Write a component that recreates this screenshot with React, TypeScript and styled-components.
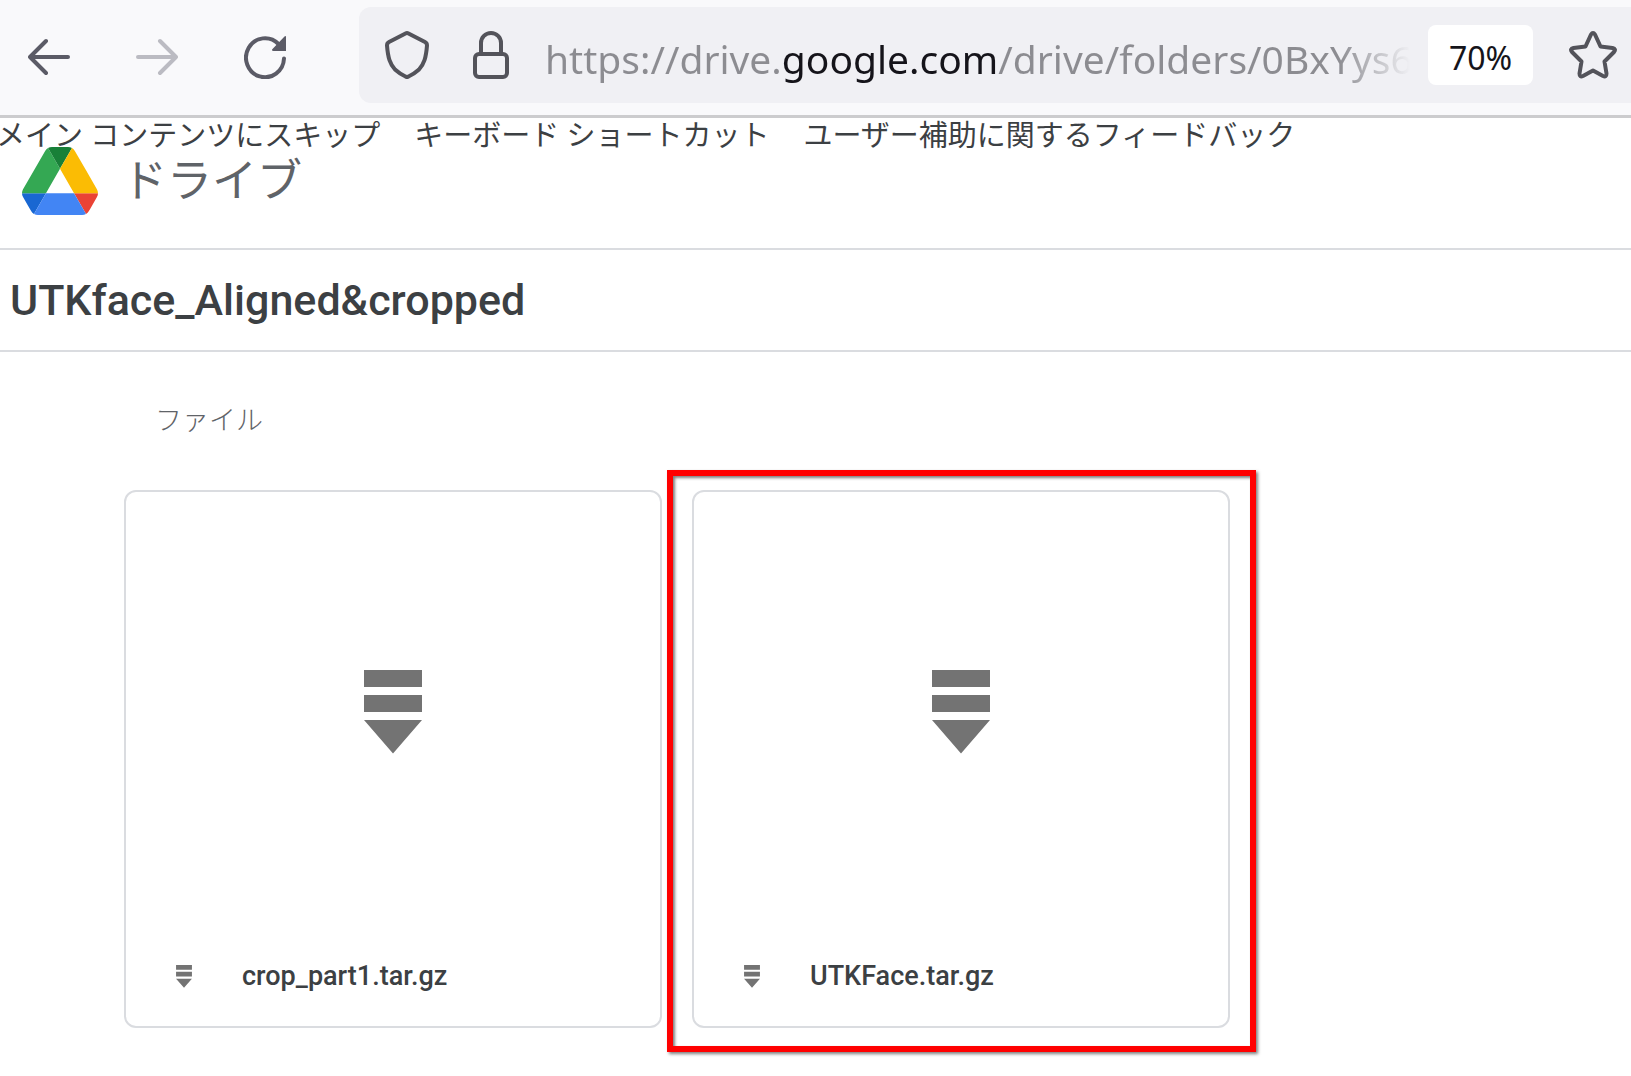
import React from "react";
import styled, { createGlobalStyle } from "styled-components";

const GlobalStyle = createGlobalStyle`
  * { box-sizing: border-box; }
  body {
    margin: 0;
    background: #ffffff;
    color: #3c4043;
    font-family: Roboto, "Noto Sans CJK JP", sans-serif;
    overflow-x: hidden;
  }
  svg { display: block; }
`;

const Toolbar = styled.header`
  display: flex;
  align-items: center;
  gap: 73px;
  padding: 7px 0 12px 28px;
  background: #f9f9fb;
  border-bottom: 3px solid #ccccce;
`;

const NavButtons = styled.div`
  display: flex;
  align-items: center;
  gap: 66px;
  padding-top: 4px;
`;

const IconButton = styled.button`
  flex: none;
  padding: 0;
  border: 0;
  background: none;
  color: #5b5b66;

  &:disabled { color: #bbbbc2; }
`;

const AddressBar = styled.div`
  flex: 1;
  min-width: 0;
  height: 96px;
  display: flex;
  align-items: center;
  padding: 0 14px 0 26px;
  background: #f0f0f4;
  border-radius: 12px 0 0 12px;

  ${IconButton} { color: #53535a; }
`;

const SiteInfo = styled.div`
  display: flex;
  gap: 44px;
  margin-right: 36px;
`;

const UrlInput = styled.input`
  flex: 1;
  min-width: 0;
  height: 72px;
  padding: 6px 0 0;
  border: 0;
  outline: 0;
  font: 39px "Noto Sans", sans-serif;
  color: transparent;
  background: linear-gradient(
    90deg,
    #8c8c91 237px,
    #15141a 237px,
    #15141a 453px,
    #8c8c91 453px,
    #8c8c91 calc(100% - 72px),
    transparent 100%
  );
  background-clip: text;
  -webkit-background-clip: text;
`;

const ZoomLevel = styled.button`
  flex: none;
  width: 105px;
  height: 60px;
  margin: 0 36px 0 18px;
  padding: 4px 0 0;
  border: 0;
  border-radius: 8px;
  background: #ffffff;
  color: #15141a;
  font: 32px "Noto Sans", sans-serif;
`;

const SkipLinks = styled.nav`
  display: flex;
  gap: 34px;
  margin-left: -4px;
  height: 30px;
  white-space: nowrap;
`;

const SkipLink = styled.a`
  color: #3c4043;
  font-size: 29px;
  font-weight: 400;
  line-height: 36px;
  text-decoration: none;
`;

const Brand = styled.div`
  display: flex;
  align-items: center;
  gap: 24px;
  height: 102px;
  padding: 0 22px 34px;
  border-bottom: 2px solid #dadce0;
  color: #5f6368;
  font-size: 45px;
  font-weight: 400;
  line-height: 64px;
`;

const BrandName = styled.span`
  padding-top: 2px;
`;

const FolderTitle = styled.h1`
  margin: 0;
  padding: 26px 10px;
  border-bottom: 2px solid #dadce0;
  font-size: 43px;
  font-weight: 500;
  line-height: 48px;
`;

const Files = styled.main`
  padding: 48px 124px;
`;

const SectionTitle = styled.h2`
  margin: 0 0 50px;
  padding-left: 31px;
  color: #5f6368;
  font-size: 27px;
  font-weight: 300;
  line-height: 42px;
  height: 40px;
`;

const FileGrid = styled.div`
  display: flex;
  gap: 30px;
`;

const FileCard = styled.article`
  position: relative;
  display: flex;
  flex-direction: column;
  width: 538px;
  border: 2px solid #dadce0;
  border-radius: 12px;
`;

const Preview = styled.div`
  display: flex;
  align-items: center;
  justify-content: center;
  height: 440px;
  color: #737373;
`;

const FileLabel = styled.div`
  display: flex;
  align-items: center;
  gap: 50px;
  height: 94px;
  padding: 0 50px 6px;
  color: #737373;
`;

const FileName = styled.span`
  color: #3c4043;
  font-size: 27px;
  font-weight: 500;
  line-height: 32px;
`;

const Highlight = styled.div`
  position: absolute;
  inset: -22px -28px -26px -27px;
  border: 6px solid #ff0000;
  box-shadow: 2px 2px 3px rgba(0, 0, 0, 0.5), inset 2px 2px 3px rgba(0, 0, 0, 0.5);
  pointer-events: none;
`;

const stroke = {
  fill: "none",
  stroke: "currentColor",
  strokeWidth: 4,
  strokeLinecap: "round",
  strokeLinejoin: "round",
} as const;

const ArrowIcon = ({ forward = false }: { forward?: boolean }) => (
  <svg width="42" height="42" viewBox="0 0 42 42" {...stroke}>
    <path d={forward ? "M2 21H40M24 5L40 21L24 37" : "M40 21H2M18 5L2 21L18 37"} />
  </svg>
);

const ReloadIcon = () => (
  <svg width="42" height="44" viewBox="0 0 42 44">
    <path d="M40 23.500A19 19.500 0 1 1 34.500 9" {...stroke} />
    <path d="M42 1.500V16H29.500Q27 15.500 28.500 14L40.500 1.500Q41.500 .5 42 1.500Z" fill="currentColor" />
  </svg>
);

const ShieldIcon = () => (
  <svg width="44" height="48" viewBox="0 0 44 48" {...stroke}>
    <path d="M20.500 2.500Q22 1.700 23.500 2.500L40 11Q42 12 42 14.500C41 27 39 33 34 38.500Q29 43 23.500 45.500Q22 46.500 20.500 45.500Q15 43 10 38.500C5 33 3 27 2 14.500Q2 12 4 11Z" />
  </svg>
);

const LockIcon = () => (
  <svg width="36" height="48" viewBox="0 0 36 48" {...stroke}>
    <rect x="2" y="23" width="32" height="23" rx="4" />
    <path d="M8 23V12A10 10 0 0 1 28 12V23" />
  </svg>
);

const StarIcon = () => (
  <svg width="48" height="48" viewBox="0 0 48 48" {...stroke}>
    <path d="M22 3.500Q24 .5 26 3.500L31.500 15.500L43.500 17Q47.500 18 45 21L35.500 30.500L37.500 42.500Q37.500 46.500 34 45L24 39.500L14 45Q10.500 46.500 10.500 42.500L12.500 30.500L3 21Q.5 18 4.500 17L16.500 15.500Z" />
  </svg>
);

const DriveLogo = () => (
  <svg width="76" height="68" viewBox="0 0 87.300 78" role="img" aria-label="Google">
    <path fill="#1967d2" d="m6.600 66.850 3.850 6.650c.8 1.400 1.950 2.500 3.300 3.300l13.750-23.800h-27.500c0 1.550.4 3.100 1.200 4.500z" />
    <path fill="#34a853" d="m43.650 25-13.750-23.800c-1.350.8-2.500 1.900-3.300 3.300l-25.400 44a9.060 9.060 0 0 0-1.200 4.500h27.500z" />
    <path fill="#ea4335" d="m73.550 76.800c1.350-.8 2.500-1.900 3.300-3.300l1.600-2.750 7.650-13.250c.8-1.400 1.200-2.950 1.200-4.500h-27.500z" />
    <path fill="#188038" d="m43.650 25 13.750-23.800c-1.350-.8-2.900-1.200-4.500-1.200h-18.500c-1.600 0-3.150.45-4.500 1.200z" />
    <path fill="#4285f4" d="m59.800 53h-32.300l-13.750 23.800c1.350.8 2.900 1.200 4.500 1.200h50.800c1.600 0 3.150-.45 4.500-1.200z" />
    <path fill="#fbbc04" d="m73.400 26.500-12.700-22c-.8-1.400-1.950-2.500-3.300-3.300l-13.750 23.800 16.150 28h27.450c0-1.550-.4-3.100-1.200-4.500z" />
  </svg>
);

const ArchiveIcon = ({ width, height }: { width: number; height: number }) => (
  <svg width={width} height={height} viewBox="0 0 58 84" fill="currentColor">
    <path d="M0 0H58V17H0ZM0 25H58V42H0ZM0 50H58L29 83.500Z" />
  </svg>
);

const skipLinks = [
  "メイン コンテンツにスキップ",
  "キーボード ショートカット",
  "ユーザー補助に関するフィードバック",
];

const files = [
  { name: "crop_part1.tar.gz", highlighted: false },
  { name: "UTKFace.tar.gz", highlighted: true },
];

export default function App() {
  return (
    <>
      <GlobalStyle />
      <Toolbar>
        <NavButtons>
          <IconButton aria-label="Back"><ArrowIcon /></IconButton>
          <IconButton aria-label="Forward" disabled><ArrowIcon forward /></IconButton>
          <IconButton aria-label="Reload"><ReloadIcon /></IconButton>
        </NavButtons>
        <AddressBar>
          <SiteInfo>
            <IconButton aria-label="Tracking protection"><ShieldIcon /></IconButton>
            <IconButton aria-label="Site security"><LockIcon /></IconButton>
          </SiteInfo>
          <UrlInput
            aria-label="Address"
            spellCheck={false}
            defaultValue="https://drive.google.com/drive/folders/0BxYys69"
          />
          <ZoomLevel>70%</ZoomLevel>
          <IconButton aria-label="Bookmark"><StarIcon /></IconButton>
        </AddressBar>
      </Toolbar>

      <SkipLinks>
        {skipLinks.map((label) => (
          <SkipLink key={label} href="#files">{label}</SkipLink>
        ))}
      </SkipLinks>
      <Brand>
        <DriveLogo />
        <BrandName>ドライブ</BrandName>
      </Brand>
      <FolderTitle>UTKface_Aligned&amp;cropped</FolderTitle>

      <Files id="files">
        <SectionTitle>ファイル</SectionTitle>
        <FileGrid>
          {files.map((file) => (
            <FileCard key={file.name}>
              <Preview><ArchiveIcon width={58} height={84} /></Preview>
              <FileLabel>
                <ArchiveIcon width={16} height={23} />
                <FileName>{file.name}</FileName>
              </FileLabel>
              {file.highlighted && <Highlight />}
            </FileCard>
          ))}
        </FileGrid>
      </Files>
    </>
  );
}
